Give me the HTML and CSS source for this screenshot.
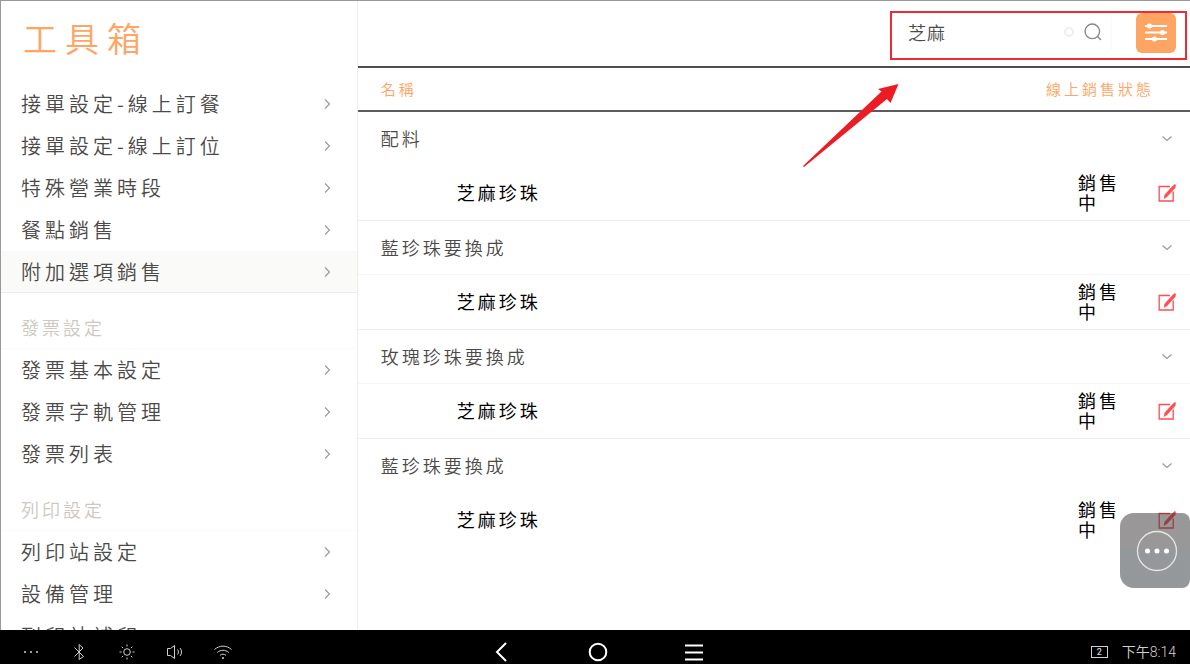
FILE: index.html
```html
<!DOCTYPE html>
<html lang="zh-Hant">
<head>
<meta charset="utf-8">
<meta name="viewport" content="width=device-width, initial-scale=1">
<title>工具箱</title>
<link rel="stylesheet" href="styles.css">
</head>
<body>
<svg class="defs" aria-hidden="true">
  <symbol id="right" viewBox="0 0 12 12"><path d="M4 1.500l4.500 4.500L4 10.500"/></symbol>
  <symbol id="down" viewBox="0 0 12 12"><path d="M1.500 3.500L6 7.500l4.500-4"/></symbol>
  <symbol id="edit" viewBox="0 0 20 20"><path d="M13 3.500H2.200v14.500h14V8.500" fill="none" stroke="currentColor" stroke-width="1.300"/><path d="M15.200 3.500l2.600-2.200 1 .7-.7 3-8.300 9-2.800 1.600.6-3.600z" fill="currentColor" stroke="currentColor" stroke-width=".4"/></symbol>
</svg>
<div class="app">
  <aside class="sidebar">
    <h1 class="title">工具箱</h1>
    <nav class="menu">
      <a class="item" href="#">接單設定-線上訂餐<svg class="chevron"><use href="#right"/></svg></a>
      <a class="item" href="#">接單設定-線上訂位<svg class="chevron"><use href="#right"/></svg></a>
      <a class="item" href="#">特殊營業時段<svg class="chevron"><use href="#right"/></svg></a>
      <a class="item" href="#">餐點銷售<svg class="chevron"><use href="#right"/></svg></a>
      <a class="item active" href="#" aria-current="page">附加選項銷售<svg class="chevron"><use href="#right"/></svg></a>
      <h2 class="group">發票設定</h2>
      <a class="item" href="#">發票基本設定<svg class="chevron"><use href="#right"/></svg></a>
      <a class="item" href="#">發票字軌管理<svg class="chevron"><use href="#right"/></svg></a>
      <a class="item" href="#">發票列表<svg class="chevron"><use href="#right"/></svg></a>
      <h2 class="group">列印設定</h2>
      <a class="item" href="#">列印站設定<svg class="chevron"><use href="#right"/></svg></a>
      <a class="item" href="#">設備管理<svg class="chevron"><use href="#right"/></svg></a>
      <a class="item" href="#">列印站補印<svg class="chevron"><use href="#right"/></svg></a>
    </nav>
  </aside>
  <main class="main">
    <header class="toolbar">
      <form class="search">
        <input class="query" type="text" value="芝麻" aria-label="搜尋">
        <button class="clear" type="button" aria-label="清除"><svg viewBox="0 0 12 12"><circle cx="6" cy="6" r="4"/></svg></button>
        <button class="find" type="button" aria-label="搜尋"><svg viewBox="0 0 20 20"><circle cx="9.300" cy="9.300" r="7.300"/><path d="M14.500 14.500l3.500 3.500"/></svg></button>
      </form>
      <button class="filter" type="button" aria-label="篩選"><svg viewBox="0 0 24 24"><path d="M1 5h22M1 11.500h22M1 18h22"/><circle cx="5.500" cy="5" r="2.500"/><circle cx="18.500" cy="11.500" r="2.500"/><circle cx="10.500" cy="18" r="2.500"/></svg></button>
      <div class="callout"></div>
      <svg class="arrow" viewBox="0 0 96 83" aria-hidden="true"><path d="M0 82L78.500 7.500 75 5 95.500 0 87.500 19 84 15 1 83z"/></svg>
    </header>
    <table class="list">
      <thead>
        <tr><th class="name">名稱</th><th class="state" colspan="2"><span>線上銷售狀態</span></th></tr>
      </thead>
      <tbody>
        <tr class="category"><td colspan="2">配料</td><td class="action"><svg class="chevron"><use href="#down"/></svg></td></tr>
        <tr class="option"><td>芝麻珍珠</td><td class="status">銷售中</td><td class="action"><button class="edit" type="button" aria-label="編輯"><svg><use href="#edit"/></svg></button></td></tr>
        <tr class="category"><td colspan="2">藍珍珠要換成</td><td class="action"><svg class="chevron"><use href="#down"/></svg></td></tr>
        <tr class="option"><td>芝麻珍珠</td><td class="status">銷售中</td><td class="action"><button class="edit" type="button" aria-label="編輯"><svg><use href="#edit"/></svg></button></td></tr>
        <tr class="category"><td colspan="2">玫瑰珍珠要換成</td><td class="action"><svg class="chevron"><use href="#down"/></svg></td></tr>
        <tr class="option"><td>芝麻珍珠</td><td class="status">銷售中</td><td class="action"><button class="edit" type="button" aria-label="編輯"><svg><use href="#edit"/></svg></button></td></tr>
        <tr class="category last"><td colspan="2">藍珍珠要換成</td><td class="action"><svg class="chevron"><use href="#down"/></svg></td></tr>
        <tr class="option last"><td>芝麻珍珠</td><td class="status">銷售中</td><td class="action"><button class="edit" type="button" aria-label="編輯"><svg><use href="#edit"/></svg></button></td></tr>
      </tbody>
    </table>
    <button class="assist" type="button" aria-label="更多"><svg viewBox="0 0 42 42"><circle class="ring" cx="21" cy="21" r="19.500"/><circle cx="11.500" cy="21" r="2.500"/><circle cx="21" cy="21" r="2.500"/><circle cx="30.500" cy="21" r="2.500"/></svg></button>
  </main>
</div>
<footer class="system">
  <div class="tray">
    <svg viewBox="0 0 24 24"><path class="dots" d="M6 12h.01M12 12h.01M18 12h.01"/></svg>
    <svg viewBox="0 0 24 24"><path d="M7.500 7.500l9 9L12.200 19.500v-15l3.800 3.500-8.500 8.500"/></svg>
    <svg viewBox="0 0 24 24"><circle cx="12" cy="12" r="3.300"/><path d="M12 4.500v2M12 17.500v2M4.500 12h2M17.500 12h2M6.700 6.700l1.400 1.400M15.900 15.900l1.400 1.400M6.700 17.300l1.400-1.400M15.900 8.100l1.400-1.400"/></svg>
    <svg viewBox="0 0 24 24"><path d="M4.500 8.500h3l4-3v13l-4-3h-3zM14.500 9.500c1.200 1.500 1.200 3.500 0 5M17 8c2 2.500 2 5.500 0 8"/></svg>
    <svg viewBox="0 0 24 24"><path d="M3.500 9.500c5-4.500 12-4.500 17 0M6.200 12.500c3.500-3 8.100-3 11.600 0M9 15.300c1.800-1.500 4.200-1.500 6 0"/><path class="dots" d="M12 18h.01"/></svg>
  </div>
  <div class="keys">
    <button type="button" aria-label="返回"><svg viewBox="0 0 24 24"><path d="M16 3L7 12l9 9"/></svg></button>
    <button type="button" aria-label="首頁"><svg viewBox="0 0 24 24"><circle cx="12" cy="12" r="8.300"/></svg></button>
    <button type="button" aria-label="選單"><svg viewBox="0 0 24 24"><path d="M3 5.500h18M3 12.500h18M3 19.500h18"/></svg></button>
  </div>
  <div class="info"><span class="count">2</span><time>下午8:14</time></div>
</footer>
</body>
</html>
```
FILE: styles.css
```css
* { box-sizing: border-box; }

body {
  margin: 0;
  height: 100vh;
  display: flex;
  flex-direction: column;
  overflow: hidden;
  background: #fff;
  color: #4c4a48;
  font-family: "Noto Sans CJK TC", sans-serif;
  font-size: 18px;
  font-weight: 350;
  letter-spacing: 3px;
}

button, input {
  padding: 0;
  border: 0;
  background: none;
  color: inherit;
  font: inherit;
}

button { display: grid; place-items: center; }
svg { display: block; fill: none; stroke: currentColor; }
.defs { position: absolute; width: 0; height: 0; }

.app {
  flex: 1;
  min-height: 0;
  display: grid;
  grid-template-columns: 3fr 7fr;
  border-top: 1px solid #9a9899;
  border-left: 1px solid #9a9899;
}

.sidebar {
  min-height: 0;
  overflow: hidden;
  border-right: 1px solid #ececec;
}

.title {
  margin: 0;
  height: 82px;
  padding: 12px 22px 0;
  color: #ffa563;
  font-size: 34px;
  font-weight: 350;
  line-height: 50px;
  letter-spacing: 8px;
}

.item {
  height: 42px;
  padding: 0 24px 1px 20px;
  display: flex;
  align-items: center;
  justify-content: space-between;
  color: inherit;
  font-size: 20px;
  letter-spacing: 4px;
  text-decoration: none;
}

.item.active {
  background: #fafaf9;
  box-shadow: inset 0 -1px #ececec;
}

.group {
  margin: 0;
  height: 56px;
  padding: 13px 20px 0;
  border-bottom: 1px solid #fafafa;
  color: #cdc8c2;
  font-size: 18px;
  font-weight: 350;
  line-height: 42px;
}

.chevron {
  width: 12px;
  height: 12px;
  color: #9a9a9a;
  stroke-width: 1.2;
}

.main { position: relative; min-width: 0; }

.toolbar {
  position: relative;
  height: 67px;
  padding: 12px 14px 0 0;
  display: flex;
  justify-content: flex-end;
  gap: 24px;
  border-bottom: 2px solid #4d4d4f;
}

.search {
  width: 214px;
  height: 41px;
  padding: 0 8px 3px 9px;
  display: flex;
  align-items: center;
  gap: 8px;
  border: 1px solid #fafafa;
  border-radius: 8px;
}

.query {
  flex: 1;
  min-width: 0;
  letter-spacing: 1px;
  outline: 0;
}

.clear svg { width: 12px; height: 12px; color: #eee; stroke-width: 2; }
.find svg { width: 20px; height: 20px; color: #8a8a8a; stroke-width: 1.4; }

.filter {
  width: 40px;
  height: 40px;
  border-radius: 6px;
  background: #ffa563;
  color: #fff;
}

.filter svg { width: 24px; height: 24px; stroke-width: 1.8; }
.filter circle { fill: #fff; stroke: none; }

.callout {
  position: absolute;
  top: 10px;
  right: 3px;
  width: 297px;
  height: 49px;
  border: 2px solid #ee2a32;
}

.arrow {
  position: absolute;
  top: 83px;
  right: 291px;
  width: 96px;
  height: 83px;
  fill: #ec1c24;
  stroke: none;
}

.list { width: 100%; border-collapse: separate; border-spacing: 0; }
.list td, .list th { padding: 0; text-align: left; }

.list th {
  height: 44px;
  padding-bottom: 2px;
  border-bottom: 2px solid #5c5c5e;
  color: #ffa563;
  font-size: 15px;
  font-weight: 350;
}

.list th.name { padding-left: 23px; }
.list th.state { padding-right: 36px; }

.state span {
  display: flex;
  justify-content: flex-end;
  width: 76px;
  white-space: nowrap;
}

.list .category td { height: 54px; padding: 0 0 2px 23px; border-bottom: 1px solid #f5f5f5; }
.option { color: #000; font-weight: 400; line-height: 20px; }
.list .option td { height: 55px; padding-bottom: 2px; border-bottom: 1px solid #eee; }
.list .option td:first-child { padding-left: 99px; }
.list .category:first-child td, .list .last td { border-color: transparent; }
.list td.status { width: 66px; padding-right: 20px; }
.list .category td.action, .list .option td.action { width: 46px; padding: 0; }
.action .chevron { margin-left: 17px; }
.edit { margin-left: 13px; }
.edit svg { width: 20px; height: 20px; color: #ff4d50; stroke: none; }

.assist {
  position: absolute;
  top: 512px;
  right: 0;
  width: 70px;
  height: 75px;
  padding-left: 4px;
  border-radius: 14px 8px 8px 14px;
  background: linear-gradient(#34313280 47%, #2d333980 47%);
  color: #fff;
}

.assist svg { width: 42px; height: 42px; }
.assist circle { fill: #fff; stroke: none; }
.assist .ring { fill: none; stroke: #e6e6e6; stroke-width: 1.3; }

.system {
  height: 34px;
  padding: 10px 14px 0 19px;
  display: grid;
  grid-template-columns: 1fr auto 1fr;
  background: #000;
  color: #d0d0d0;
}

.system svg { width: 24px; height: 24px; }
.tray { display: flex; gap: 24px; }
.dots { stroke-width: 2; stroke-linecap: round; }
.keys { display: flex; align-items: start; gap: 72px; color: #fff; }
.keys svg { stroke-width: 2; }

.info {
  display: flex;
  justify-content: flex-end;
  align-items: center;
  gap: 14px;
  font-family: Roboto, "Noto Sans CJK TC", sans-serif;
  font-size: 14px;
  letter-spacing: 0;
  line-height: 24px;
}

.count {
  width: 17px;
  height: 12px;
  border: 1px solid #d0d0d0;
  font-size: 9px;
  font-weight: 500;
  line-height: 10px;
  text-align: center;
}
```
